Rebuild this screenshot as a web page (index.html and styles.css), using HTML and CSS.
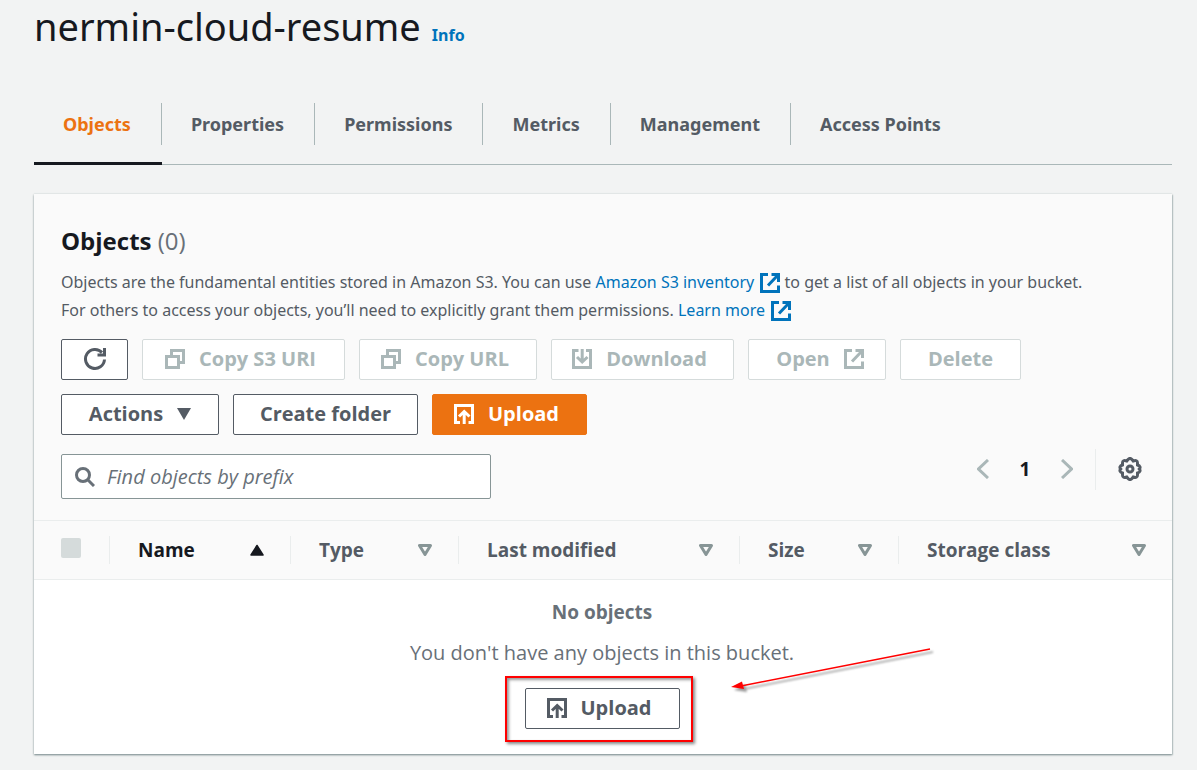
FILE: index.html
```html
<!DOCTYPE html>
<html lang="en">
<head>
<meta charset="utf-8">
<meta name="viewport" content="width=device-width, initial-scale=1">
<title>nermin-cloud-resume</title>
<link rel="stylesheet" href="styles.css">
</head>
<body>
<svg class="sprite" aria-hidden="true">
  <symbol id="copy" viewBox="0 0 20 20"><path d="M1.500 7.500h12V18.500H1.500zM6.500 7V1.500H18.500V13.500H14"/></symbol>
  <symbol id="external" viewBox="0 0 20 20"><path d="M8 1.500H1.500V18.500H18.500V12.500M11.500 1.500H18.500V9M18 2L8 12.500"/></symbol>
  <symbol id="download" viewBox="0 0 20 20"><path d="M6.500 1.500H1.500V18.500H18.500V1.500H14M10.200 0V13M5 8L10.200 13L15.500 8"/></symbol>
  <symbol id="upload" viewBox="0 0 20 20"><path d="M6 18.500H1.500V1.500H18.500V18.500H14.500M10.200 20V8M5 12.500L10.200 7.500L15.500 12.500"/></symbol>
  <symbol id="sort" viewBox="0 0 14 12"><path d="M1.500 1.500H12.500L7 10.500z"/></symbol>
</svg>

<main class="page">
  <header class="title">
    <h1>nermin-cloud-resume</h1>
    <a class="info" href="#">Info</a>
  </header>

  <nav class="tabs">
    <a class="tab active" href="#" aria-current="page"><span>Objects</span></a>
    <a class="tab" href="#"><span>Properties</span></a>
    <a class="tab" href="#"><span>Permissions</span></a>
    <a class="tab" href="#"><span>Metrics</span></a>
    <a class="tab" href="#"><span>Management</span></a>
    <a class="tab" href="#"><span>Access Points</span></a>
  </nav>

  <section class="card">
    <div class="card-head">
      <h2>Objects <span class="count">(0)</span></h2>
      <p class="description">Objects are the fundamental entities stored in Amazon S3. You can use <a href="#">Amazon S3 inventory <svg class="icon"><use href="#external"/></svg></a> to get a list of all objects in your bucket. <br>For others to access your objects, you’ll need to explicitly grant them permissions. <a href="#">Learn more <svg class="icon"><use href="#external"/></svg></a></p>

      <div class="actions">
        <button class="btn refresh" type="button" aria-label="Refresh"><svg class="icon icon-lg" viewBox="0 0 24 24"><path d="M21.500 12.500A9.500 9.500 0 1 1 19 5.500M21.500 1V8H14.500"/></svg></button>
        <button class="btn with-icon w-xl" type="button" disabled><svg class="icon"><use href="#copy"/></svg>Copy S3 URI</button>
        <button class="btn with-icon w-md" type="button" disabled><svg class="icon"><use href="#copy"/></svg>Copy URL</button>
        <button class="btn with-icon w-lg" type="button" disabled><svg class="icon"><use href="#download"/></svg>Download</button>
        <button class="btn icon-end w-xs" type="button" disabled>Open<svg class="icon"><use href="#external"/></svg></button>
        <button class="btn w-xxs" type="button" disabled>Delete</button>
        <button class="btn w-actions" type="button">Actions<svg class="caret" viewBox="0 0 14 12"><path d="M0 0H14L7 12z"/></svg></button>
        <button class="btn w-folder" type="button">Create folder</button>
        <button class="btn with-icon primary w-sm" type="button"><svg class="icon"><use href="#upload"/></svg>Upload</button>
      </div>

      <div class="tools">
        <label class="search">
          <svg class="icon" viewBox="0 0 20 20"><circle cx="8" cy="8" r="6.500"/><path d="M12.500 12.500L19 19"/></svg>
          <input type="search" placeholder="Find objects by prefix" aria-label="Find objects by prefix">
        </label>
        <div class="pager">
          <button class="page-btn" type="button" aria-label="Previous page"><svg class="chevron" viewBox="0 0 12 20"><path d="M11 1L1.500 10L11 19"/></svg></button>
          <button class="page-btn current" type="button">1</button>
          <button class="page-btn" type="button" aria-label="Next page"><svg class="chevron" viewBox="0 0 12 20"><path d="M1 1L10.500 10L1 19"/></svg></button>
          <button class="settings" type="button" aria-label="Preferences"><svg class="icon icon-lg" viewBox="0 0 24 24"><path d="M10 2.500Q12 .5 14 2.500L15.200 4Q19.500 2.500 19.500 6V8Q23.500 9.500 21.300 12Q23.500 14.500 19.500 16V18Q19.500 21.500 15.200 20L14 21.500Q12 23.500 10 21.500L8.800 20Q4.500 21.500 4.500 18V16Q.5 14.500 2.700 12Q.5 9.500 4.500 8V6Q4.500 2.500 8.800 4z"/><circle cx="12" cy="12" r="3"/></svg></button>
        </div>
      </div>
    </div>

    <table class="objects">
      <colgroup><col class="c-check"><col class="c-name"><col class="c-type"><col class="c-modified"><col class="c-size"><col></colgroup>
      <thead>
        <tr>
          <th><input type="checkbox" disabled aria-label="Select all objects"></th>
          <th class="sorted"><div class="cell">Name<svg class="sort" viewBox="0 0 14 12"><path d="M1 11L7 1.500L13 11z"/></svg></div></th>
          <th><div class="cell">Type<svg class="sort"><use href="#sort"/></svg></div></th>
          <th><div class="cell">Last modified<svg class="sort"><use href="#sort"/></svg></div></th>
          <th><div class="cell">Size<svg class="sort"><use href="#sort"/></svg></div></th>
          <th><div class="cell">Storage class<svg class="sort"><use href="#sort"/></svg></div></th>
        </tr>
      </thead>
      <tbody>
        <tr>
          <td colspan="6">
            <div class="empty">
              <strong>No objects</strong>
              <p>You don't have any objects in this bucket.</p>
              <div class="callout">
                <button class="btn with-icon w-sm" type="button"><svg class="icon"><use href="#upload"/></svg>Upload</button>
                <svg class="arrow" viewBox="0 0 206 48"><path class="line" d="M12 40L201 3"/><path class="head" d="M2 41L13 35.500L15 43z"/></svg>
              </div>
            </div>
          </td>
        </tr>
      </tbody>
    </table>
  </section>
</main>
</body>
</html>
```
FILE: styles.css
```css
* {
  box-sizing: border-box;
}

body {
  margin: 0;
  background: #f2f3f3;
  color: #545b64;
  font: 19px/28px "Open Sans", "Noto Sans", sans-serif;
}

h1, h2, p {
  margin: 0;
}

a {
  color: #0073bb;
  text-decoration: none;
}

button, input {
  font: inherit;
  color: inherit;
}

.sprite {
  display: none;
}

.icon {
  width: 20px;
  height: 20px;
  fill: none;
  stroke: currentColor;
  stroke-width: 3;
  flex: none;
}

.icon-lg {
  width: 24px;
  height: 24px;
}

.page {
  padding: 0 25px 16px 34px;
}

.title, .tabs, .description {
  font-family: "Noto Sans", "Open Sans", sans-serif;
}

.title {
  display: flex;
  align-items: baseline;
  gap: 11px;
  padding-top: 2px;
}

h1 {
  color: #16191f;
  font-size: 38px;
  font-weight: 400;
  line-height: 48px;
}

.info {
  font-size: 16px;
  font-weight: 700;
}

.tabs {
  display: flex;
  margin-top: 53px;
  border-bottom: 1px solid #aab7b8;
  font-size: 18px;
}

.tab {
  display: flex;
  padding-bottom: 19px;
  color: #545b64;
  font-weight: 700;
}

.tab span {
  padding: 7px 30px 7px 29px;
  border-right: 1px solid #aab7b8;
}

.tab:last-child span {
  border-right: 0;
}

.tab.active {
  color: #ec7211;
  margin-bottom: -1px;
  padding-bottom: 17px;
  border-bottom: 3px solid #16191f;
}

.card {
  margin-top: 29px;
  background: #fff;
  box-shadow: 0 1px 2px #7b8c8e, 1px 1px 1px #d5dbdb, 0 -1px 1px #eaeded;
}

.card-head {
  padding: 31px 27px 21px;
  background: #fafafa;
  border-bottom: 1px solid #eaeded;
}

h2 {
  color: #16191f;
  font-size: 24px;
  line-height: 32px;
}

.count {
  color: #687078;
  font-weight: 400;
}

.description {
  margin-top: 11px;
  font-size: 16px;
}

.description .icon {
  margin-left: 2px;
  vertical-align: -5px;
}

.actions {
  display: flex;
  flex-wrap: wrap;
  gap: 14px;
  margin-top: 15px;
  max-width: 1000px;
}

.btn {
  display: flex;
  align-items: center;
  justify-content: center;
  gap: 14px;
  height: 41px;
  padding: 0 0 1px;
  border: 1px solid #545b64;
  border-radius: 2px;
  background: #fff;
  font-size: 20px;
  font-weight: 700;
  white-space: nowrap;
}

.btn:disabled {
  border-color: #d5dbdb;
  color: #aab7b8;
}

.btn.primary {
  border-color: #ec7211;
  background: #ec7211;
  color: #fff;
}

.refresh { width: 67px; }
.w-xl { width: 203px; }
.w-lg { width: 183px; }
.w-md { width: 178px; }
.w-sm { width: 155px; }
.w-xs { width: 138px; }
.w-xxs { width: 121px; }
.w-actions { width: 158px; }
.w-folder { width: 185px; }

.with-icon {
  padding-right: 6px;
}

.icon-end {
  padding-left: 6px;
}

.caret {
  width: 14px;
  height: 12px;
  fill: currentColor;
}

.tools {
  display: flex;
  justify-content: space-between;
  margin-top: 14px;
}

.search {
  display: flex;
  align-items: center;
  gap: 12px;
  width: 430px;
  height: 45px;
  margin-top: 5px;
  padding: 0 13px;
  border: 1px solid #879596;
  border-radius: 2px;
  background: #fff;
  color: #687078;
}

.search input {
  flex: 1;
  min-width: 0;
  padding: 0;
  border: 0;
  outline: 0;
  background: transparent;
  font-size: 20px;
}

.search input::placeholder {
  color: #687078;
  font-style: italic;
  opacity: 1;
}

.pager {
  display: flex;
  height: 41px;
}

.page-btn, .settings {
  display: flex;
  align-items: center;
  justify-content: center;
  width: 42px;
  padding: 0 0 2px;
  border: 0;
  background: none;
  color: #aab7b8;
}

.current {
  color: #16191f;
  font-weight: 700;
}

.chevron {
  width: 12px;
  height: 20px;
  fill: none;
  stroke: currentColor;
  stroke-width: 3;
}

.settings {
  width: 50px;
  margin-left: 7px;
  padding-left: 18px;
  border-left: 1px solid #eaeded;
  color: #545b64;
}

.objects {
  width: 100%;
  table-layout: fixed;
  border-collapse: collapse;
}

.c-check { width: 76px; }
.c-name { width: 181px; }
.c-type { width: 168px; }
.c-modified { width: 281px; }
.c-size { width: 159px; }

th {
  height: 58px;
  padding: 0;
  background: #fafafa;
  border-bottom: 1px solid #eaeded;
  text-align: left;
}

th input {
  display: block;
  appearance: none;
  width: 20px;
  height: 20px;
  margin: 0 0 3px 27px;
  border-radius: 2px;
  background: #d5dbdb;
}

.cell {
  display: flex;
  align-items: center;
  justify-content: space-between;
  padding: 0 26px 0 28px;
  border-right: 1px solid #eaeded;
}

th:first-child {
  background: linear-gradient(#eaeded, #eaeded) right center / 1px 28px no-repeat #fafafa;
}

th:last-child .cell {
  border-right: 0;
}

.sorted {
  color: #16191f;
}

.sort {
  width: 14px;
  height: 12px;
  fill: none;
  stroke: #879596;
  stroke-width: 3;
  stroke-linejoin: round;
}

.sorted .sort {
  fill: currentColor;
  stroke: currentColor;
  stroke-width: 1.5;
}

td {
  padding: 0;
}

.empty {
  display: flex;
  flex-direction: column;
  align-items: center;
  padding: 18px 2px 25px 0;
  color: #687078;
}

.empty p {
  margin: 13px 0 21px;
  font-size: 20px;
}

.callout {
  position: relative;
  color: #545b64;
}

.callout::before {
  content: "";
  position: absolute;
  inset: -12px -13px -13px -20px;
  border: 2px solid #f00;
  box-shadow: 2px 2px 3px #888, inset 2px 2px 3px #999;
  pointer-events: none;
}

.callout .btn {
  position: relative;
  padding-bottom: 0;
}

.arrow {
  position: absolute;
  left: 204px;
  top: -42px;
  width: 206px;
  height: 48px;
  filter: drop-shadow(3px 3px 1px #999);
}

.line {
  stroke: #f00;
  stroke-width: 1.5;
}

.head {
  fill: #f00;
}
```
